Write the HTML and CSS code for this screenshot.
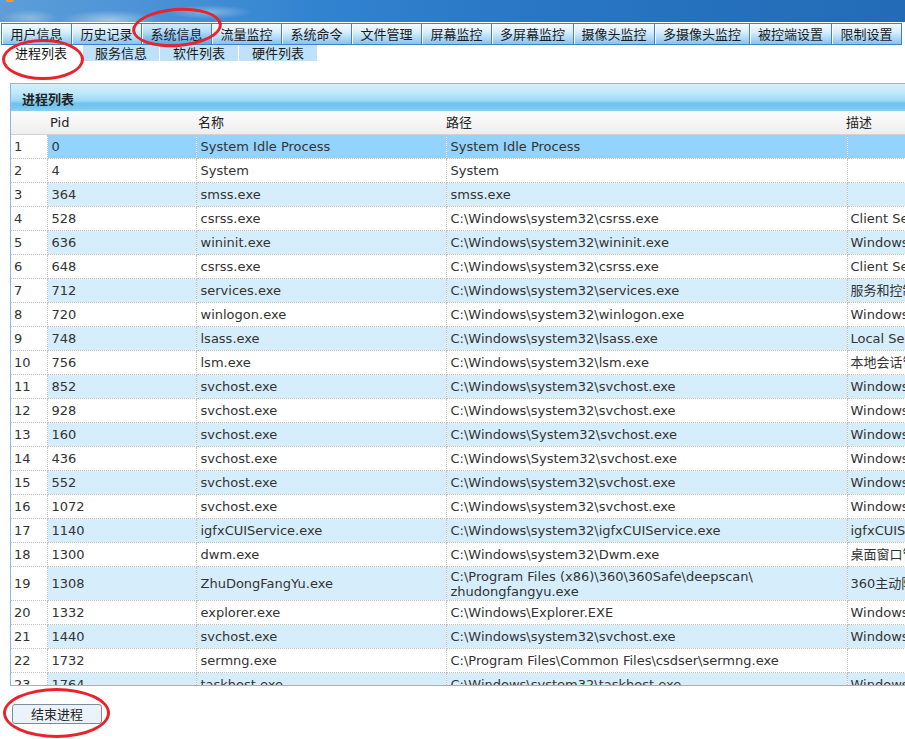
FILE: index.html
```html
<!DOCTYPE html>
<html lang="zh-CN">
<head>
<meta charset="utf-8">
<title>系统信息 - 进程列表</title>
<link rel="stylesheet" href="styles.css">
</head>
<body>
<header class="banner"><span class="logo-dot"></span></header>
<nav class="tabs">
  <a class="tab w70">用户信息</a>
  <a class="tab w70">历史记录</a>
  <a class="tab w70 active">系统信息</a>
  <a class="tab w70">流量监控</a>
  <a class="tab w70">系统命令</a>
  <a class="tab w70">文件管理</a>
  <a class="tab w70">屏幕监控</a>
  <a class="tab w82">多屏幕监控</a>
  <a class="tab w81">摄像头监控</a>
  <a class="tab w95">多摄像头监控</a>
  <a class="tab w82">被控端设置</a>
  <a class="tab w71">限制设置</a>
</nav>
<nav class="subtabs">
  <a class="subtab first active">进程列表</a>
  <a class="subtab s76">服务信息</a>
  <a class="subtab s78">软件列表</a>
  <a class="subtab s78">硬件列表</a>
</nav>
<section class="panel">
  <div class="panel-title">进程列表</div>
  <div class="grid-head">
    <span class="h-num"></span>
    <span class="h-pid">Pid</span>
    <span class="h-name">名称</span>
    <span class="h-path">路径</span>
    <span class="h-desc">描述</span>
  </div>
  <div class="grid-body">
    <table class="grid">
      <colgroup>
        <col class="c-num"><col class="c-pid"><col class="c-name"><col class="c-path"><col class="c-desc">
      </colgroup>
      <tbody>
        <tr class="sel"><td class="num">1</td><td>0</td><td>System Idle Process</td><td>System Idle Process</td><td></td></tr>
        <tr><td class="num">2</td><td>4</td><td>System</td><td>System</td><td></td></tr>
        <tr class="alt"><td class="num">3</td><td>364</td><td>smss.exe</td><td>smss.exe</td><td></td></tr>
        <tr><td class="num">4</td><td>528</td><td>csrss.exe</td><td>C:\Windows\system32\csrss.exe</td><td>Client Server Runtime Process</td></tr>
        <tr class="alt"><td class="num">5</td><td>636</td><td>wininit.exe</td><td>C:\Windows\system32\wininit.exe</td><td>Windows 启动应用程序</td></tr>
        <tr><td class="num">6</td><td>648</td><td>csrss.exe</td><td>C:\Windows\system32\csrss.exe</td><td>Client Server Runtime Process</td></tr>
        <tr class="alt"><td class="num">7</td><td>712</td><td>services.exe</td><td>C:\Windows\system32\services.exe</td><td>服务和控制器应用程序</td></tr>
        <tr><td class="num">8</td><td>720</td><td>winlogon.exe</td><td>C:\Windows\system32\winlogon.exe</td><td>Windows 登录应用程序</td></tr>
        <tr class="alt"><td class="num">9</td><td>748</td><td>lsass.exe</td><td>C:\Windows\system32\lsass.exe</td><td>Local Security Authority Process</td></tr>
        <tr><td class="num">10</td><td>756</td><td>lsm.exe</td><td>C:\Windows\system32\lsm.exe</td><td>本地会话管理器服务</td></tr>
        <tr class="alt"><td class="num">11</td><td>852</td><td>svchost.exe</td><td>C:\Windows\system32\svchost.exe</td><td>Windows 服务主进程</td></tr>
        <tr><td class="num">12</td><td>928</td><td>svchost.exe</td><td>C:\Windows\system32\svchost.exe</td><td>Windows 服务主进程</td></tr>
        <tr class="alt"><td class="num">13</td><td>160</td><td>svchost.exe</td><td>C:\Windows\System32\svchost.exe</td><td>Windows 服务主进程</td></tr>
        <tr><td class="num">14</td><td>436</td><td>svchost.exe</td><td>C:\Windows\System32\svchost.exe</td><td>Windows 服务主进程</td></tr>
        <tr class="alt"><td class="num">15</td><td>552</td><td>svchost.exe</td><td>C:\Windows\system32\svchost.exe</td><td>Windows 服务主进程</td></tr>
        <tr><td class="num">16</td><td>1072</td><td>svchost.exe</td><td>C:\Windows\system32\svchost.exe</td><td>Windows 服务主进程</td></tr>
        <tr class="alt"><td class="num">17</td><td>1140</td><td>igfxCUIService.exe</td><td>C:\Windows\system32\igfxCUIService.exe</td><td>igfxCUIService Module</td></tr>
        <tr><td class="num">18</td><td>1300</td><td>dwm.exe</td><td>C:\Windows\system32\Dwm.exe</td><td>桌面窗口管理器</td></tr>
        <tr class="alt tall"><td class="num">19</td><td>1308</td><td>ZhuDongFangYu.exe</td><td>C:\Program Files (x86)\360\360Safe\deepscan\<br>zhudongfangyu.exe</td><td>360主动防御服务模块</td></tr>
        <tr><td class="num">20</td><td>1332</td><td>explorer.exe</td><td>C:\Windows\Explorer.EXE</td><td>Windows 资源管理器</td></tr>
        <tr class="alt"><td class="num">21</td><td>1440</td><td>svchost.exe</td><td>C:\Windows\system32\svchost.exe</td><td>Windows 服务主进程</td></tr>
        <tr><td class="num">22</td><td>1732</td><td>sermng.exe</td><td>C:\Program Files\Common Files\csdser\sermng.exe</td><td></td></tr>
        <tr class="alt"><td class="num">23</td><td>1764</td><td>taskhost.exe</td><td>C:\Windows\system32\taskhost.exe</td><td>Windows 任务的主机进程</td></tr>
        <tr><td class="num">24</td><td>1820</td><td>svchost.exe</td><td>C:\Windows\system32\svchost.exe</td><td>Windows 服务主进程</td></tr>
      </tbody>
    </table>
  </div>
</section>
<div class="actions"><button class="btn" type="button">结束进程</button></div>
<span class="mark mark-tab"></span>
<span class="mark mark-sub"></span>
<span class="mark mark-btn"></span>
</body>
</html>
```
FILE: styles.css
```css
html, body {
  margin: 0;
  padding: 0;
  overflow: hidden;
  background: #ffffff;
}
body {
  position: relative;
  width: 905px;
  height: 739px;
  font-family: "DejaVu Sans", Verdana, "Noto Sans CJK SC", sans-serif;
  font-size: 13px;
  color: #333333;
}

/* banner */
.banner {
  position: relative;
  height: 22px;
  background:
    radial-gradient(ellipse 70px 14px at 110px 20px, rgba(255,255,255,0.45), rgba(255,255,255,0) 70%),
    radial-gradient(ellipse 60px 10px at 210px 12px, rgba(255,255,255,0.35), rgba(255,255,255,0) 70%),
    radial-gradient(ellipse 40px 12px at 30px 18px, rgba(255,255,255,0.3), rgba(255,255,255,0) 70%),
    linear-gradient(90deg, #5d9ed9 0%, #4d93d6 15%, #3183d0 35%, #2a78c6 55%, #2570bd 80%, #236bb6 100%);
}
.logo-dot {
  position: absolute;
  left: 6px;
  top: 0;
  width: 8px;
  height: 2px;
  background: #f0a020;
  border-radius: 0 0 3px 3px;
}

/* main tabs */
.tabs {
  display: flex;
  padding: 1px 0 0 1px;
  background: #ffffff;
  font-family: "Noto Sans CJK SC", sans-serif;
}
.tab {
  box-sizing: border-box;
  height: 22px;
  line-height: 20px;
  text-align: center;
  color: #1a1a1a;
  font-size: 13px;
  border: 1px solid #3f82c6;
  border-right: none;
  box-shadow: inset 1px 0 0 #ffffff;
  background: linear-gradient(#f4fbff 0%, #d8eefc 40%, #a9d6f6 75%, #86c2ef 100%);
  cursor: pointer;
}
.tab:last-child { border-right: 1px solid #3f82c6; }
.tab.active {
  background: linear-gradient(#d4ecfc 0%, #b3dcf8 40%, #7dbcee 75%, #5ea8e6 100%);
}
.w70 { width: 70px; }
.w71 { width: 71px; }
.w81 { width: 81px; }
.w82 { width: 82px; }
.w95 { width: 95px; }

/* sub tabs */
.subtabs {
  display: flex;
  height: 16px;
  font-family: "Noto Sans CJK SC", sans-serif;
}
.subtab {
  line-height: 16px;
  text-align: center;
  color: #1a1a1a;
  font-size: 13px;
  background: #bfe2fa;
  margin-left: 1px;
}
.subtab.first { width: 82px; margin-left: 0; background: #ffffff; color: #111111; }
.s76 { width: 76px; }
.s78 { width: 78px; }

/* panel */
.panel {
  box-sizing: border-box;
  margin: 22px 0 0 10px;
  width: 1000px;
  height: 603px;
  border: 1px solid #8db4e4;
  overflow: hidden;
  display: flex;
  flex-direction: column;
}
.panel-title {
  height: 27px;
  line-height: 30px;
  padding-left: 11px;
  font-family: "Noto Sans CJK SC", sans-serif;
  font-weight: bold;
  font-size: 13px;
  color: #222222;
  background: linear-gradient(#d2f1fd 0%, #bde8fb 35%, #9ad9f6 62%, #6fc4ef 72%, #74c6ef 85%, #8ccff2 100%);
}
.grid-head {
  display: flex;
  height: 24px;
  box-sizing: border-box;
  line-height: 23px;
  border-bottom: 1px solid #d2d2d2;
  background: linear-gradient(#fcfcfc, #eeeeee);
  color: #222222;
  font-family: "DejaVu Sans", "Noto Sans CJK SC", sans-serif;
  font-size: 13px;
}
.h-num { width: 39px; flex: none; }
.h-pid { width: 148px; flex: none; }
.h-name { width: 248px; flex: none; }
.h-path { width: 400px; flex: none; }
.h-desc { flex: 1; }

.grid-body { flex: 1; overflow: hidden; }
.grid {
  border-collapse: collapse;
  table-layout: fixed;
  width: 988px;
}
.c-num { width: 36px; }
.c-pid { width: 149px; }
.c-name { width: 250px; }
.c-path { width: 401px; }
.c-desc { width: 152px; }
.grid td {
  height: 23px;
  padding: 0 4px;
  border-right: 1px dotted #c2c2c2;
  border-bottom: 1px dotted #c2c2c2;
  white-space: nowrap;
  overflow: hidden;
  vertical-align: middle;
  line-height: 15px;
  font-size: 13px;
  color: #333333;
}
.grid td:last-child { padding-left: 3px; }
.grid td.num { padding-left: 3px; background: #ffffff; }
.grid tr.alt td { background: #d6eefc; }
.grid tr.sel td { background: #93d3fd; }
.grid tr td.num { background: #ffffff; }
.grid tr.tall td { height: 33px; }

/* actions */
.actions { padding: 18px 0 0 12px; }
.btn {
  width: 90px;
  height: 20px;
  padding: 0;
  font-family: "Noto Sans CJK SC", sans-serif;
  font-size: 13px;
  line-height: 18px;
  color: #222222;
  background: #eaf3fb;
  border: 1px solid #7f8c99;
  border-radius: 3px;
}

/* red annotation ellipses */
.mark {
  position: absolute;
  box-sizing: border-box;
  border: 3px solid #e8232b;
  border-radius: 50%;
  pointer-events: none;
}
.mark-tab { left: 132px; top: 8px; width: 90px; height: 39px; transform: rotate(-4deg); }
.mark-sub { left: 2px; top: 39px; width: 82px; height: 41px; }
.mark-btn { left: 3px; top: 688px; width: 107px; height: 50px; }
```
